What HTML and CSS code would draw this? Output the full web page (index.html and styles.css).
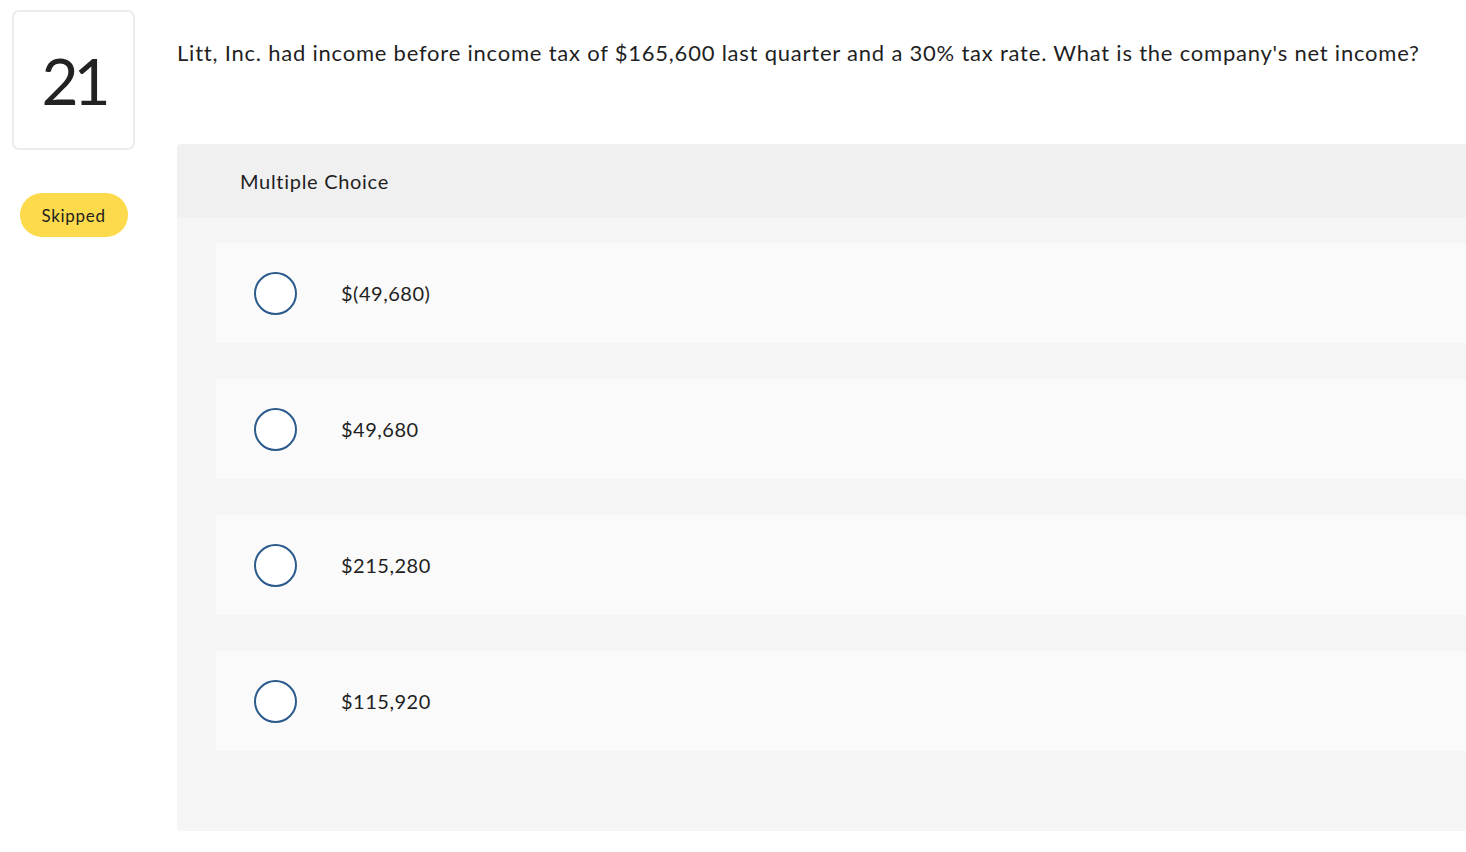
FILE: index.html
```html
<!DOCTYPE html>
<html>
<head>
<meta charset="utf-8">
<link rel="stylesheet" href="styles.css">
</head>
<body>
<div class="page">
  <aside class="side">
    <div class="qnum">21</div>
    <div class="status">Skipped</div>
  </aside>
  <main class="main">
    <p class="question">Litt, Inc. had income before income tax of $165,600 last quarter and a 30% tax rate. What is the company's net income?</p>
    <section class="panel">
      <div class="panel-head">Multiple Choice</div>
      <div class="options">
        <div class="option"><span class="radio"></span><span class="label">$(49,680)</span></div>
        <div class="option"><span class="radio"></span><span class="label">$49,680</span></div>
        <div class="option"><span class="radio"></span><span class="label">$215,280</span></div>
        <div class="option"><span class="radio"></span><span class="label">$115,920</span></div>
      </div>
    </section>
  </main>
</div>
</body>
</html>
```
FILE: styles.css
```css
html, body {
  margin: 0;
  padding: 0;
  background: #ffffff;
  overflow: hidden;
}
body {
  font-family: "Lato", "Liberation Sans", sans-serif;
  color: #1f1f1f;
  width: 1466px;
  height: 852px;
}
.page {
  display: flex;
  padding: 10px 0 0 12px;
}
.side {
  width: 123px;
  flex: none;
  display: flex;
  flex-direction: column;
  align-items: center;
}
.qnum {
  box-sizing: border-box;
  width: 123px;
  height: 140px;
  border: 2px solid #ececec;
  border-radius: 7px;
  display: flex;
  align-items: center;
  justify-content: center;
  font-size: 64px;
  color: #222;
  letter-spacing: -5px;
  padding-left: 0;
}
.status {
  margin-top: 43px;
  width: 108px;
  height: 44px;
  border-radius: 22px;
  background: #fcda4b;
  display: flex;
  align-items: center;
  justify-content: center;
  font-size: 17px;
  letter-spacing: 0.7px;
  color: #1f1f1f;
}
.main {
  margin-left: 42px;
  flex: 1;
}
.question {
  margin: 29px 0 0 0;
  font-size: 22px;
  line-height: 28px;
  height: 105px;
  letter-spacing: 0.78px;
}
.panel {
  background: #f5f5f5;
  border-radius: 4px 0 0 4px;
  height: 687px;
  box-sizing: border-box;
}
.panel-head {
  background: #f0f0f0;
  height: 74px;
  padding-left: 63px;
  display: flex;
  align-items: center;
  font-size: 20px;
  letter-spacing: 0.7px;
  border-radius: 4px 0 0 0;
}
.options {
  padding: 25px 0 0 39px;
  display: flex;
  flex-direction: column;
  gap: 36px;
}
.option {
  background: #fafafa;
  height: 100px;
  border-radius: 4px 0 0 4px;
  display: flex;
  align-items: center;
  padding-left: 38px;
}
.radio {
  box-sizing: border-box;
  width: 43px;
  height: 43px;
  border: 2px solid #2b5a8c;
  border-radius: 50%;
  background: #fff;
  flex: none;
}
.label {
  margin-left: 44px;
  font-size: 20px;
  letter-spacing: 0.5px;
}
```
